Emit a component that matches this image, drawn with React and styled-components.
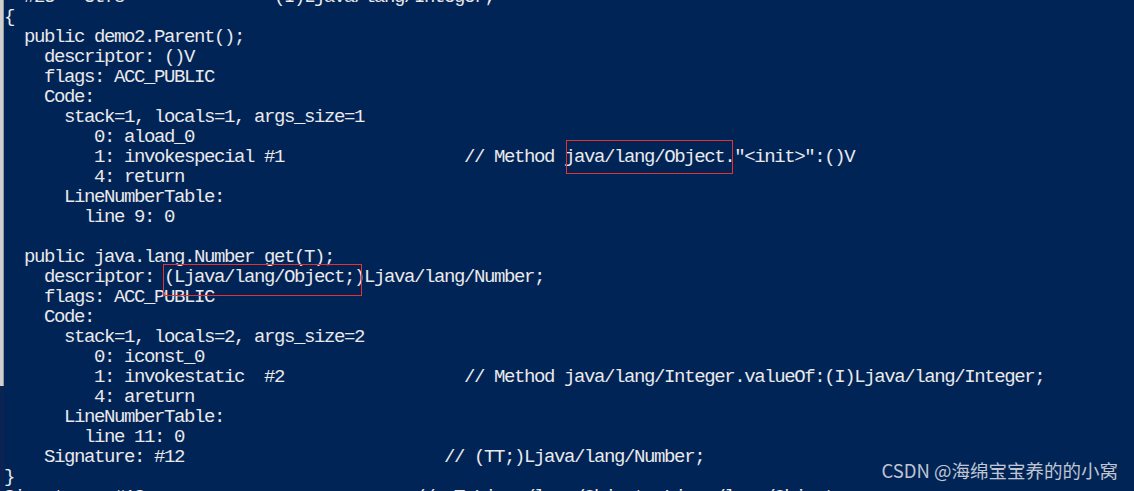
import React from "react";
import styled, { createGlobalStyle } from "styled-components";

const Global = createGlobalStyle`
  html, body { margin: 0; padding: 0; background: #012456; overflow: hidden; }
  #root { width: 1134px; height: 491px; }
`;

const Page = styled.div`
  display: flex;
  width: 1134px;
  height: 491px;
  overflow: hidden;
  position: relative;
  background: #012456;
`;

const Edge = styled.div`
  width: 4px;
  flex: none;
  display: flex;
  flex-direction: column;
  background: #0a2353;
`;

const EdgeGray = styled.div`
  height: 386px;
  background: #cfcfcf;
  border-right: 1px solid #9a9a9a;
  box-sizing: border-box;
`;

const Console = styled.div`
  flex: 1;
  display: flex;
  flex-direction: column;
  margin-top: -13px;
  font-family: "Liberation Mono", "DejaVu Sans Mono", monospace;
  font-size: 19px;
  letter-spacing: -1.4px;
  color: #e9e9ec;
`;

const Line = styled.div`
  height: 20px;
  line-height: 20px;
  white-space: pre;
  flex: none;
`;

const Highlight = styled.span`
  position: relative;
  &::after {
    content: "";
    position: absolute;
    top: ${(p) => p.$t}px;
    bottom: ${(p) => p.$b}px;
    left: ${(p) => p.$l}px;
    right: ${(p) => p.$r}px;
    border: 1px solid #e8322f;
    pointer-events: none;
  }
`;

const Watermark = styled.div`
  position: absolute;
  right: 16px;
  top: 458px;
  font-family: "Noto Sans CJK SC", "Noto Sans", sans-serif;
  font-size: 18.5px;
  line-height: 24px;
  color: rgba(235, 235, 240, 0.82);
  white-space: nowrap;
`;

const lines = [
  "  #23 = Utf8               (I)Ljava/lang/Integer;",
  "{",
  "  public demo2.Parent();",
  "    descriptor: ()V",
  "    flags: ACC_PUBLIC",
  "    Code:",
  "      stack=1, locals=1, args_size=1",
  "         0: aload_0",
  "HL1",
  "         4: return",
  "      LineNumberTable:",
  "        line 9: 0",
  "",
  "  public java.lang.Number get(T);",
  "HL2",
  "    flags: ACC_PUBLIC",
  "    Code:",
  "      stack=1, locals=2, args_size=2",
  "         0: iconst_0",
  "         1: invokestatic  #2                  // Method java/lang/Integer.valueOf:(I)Ljava/lang/Integer;",
  "         4: areturn",
  "      LineNumberTable:",
  "        line 11: 0",
  "    Signature: #12                          // (TT;)Ljava/lang/Number;",
  "}",
  "Signature: #13                           // <T:Ljava/lang/Object;>Ljava/lang/Object;",
];

function renderLine(text, i) {
  if (text === "HL1") {
    return (
      <Line key={i}>
        {"         1: invokespecial #1                  // Method "}
        <Highlight $t={-6} $b={-6} $l={2} $r={1}>java/lang/Object.</Highlight>
        {'"<init>":()V'}
      </Line>
    );
  }
  if (text === "HL2") {
    return (
      <Line key={i}>
        {"    descriptor: "}
        <Highlight $t={-2} $b={-8} $l={-1} $r={2}>(Ljava/lang/Object;)</Highlight>
        {"Ljava/lang/Number;"}
      </Line>
    );
  }
  return <Line key={i}>{text}</Line>;
}

export default function App() {
  return (
    <>
      <Global />
      <Page>
        <Edge>
          <EdgeGray />
        </Edge>
        <Console>{lines.map(renderLine)}</Console>
        <Watermark>CSDN @海绵宝宝养的的小窝</Watermark>
      </Page>
    </>
  );
}
